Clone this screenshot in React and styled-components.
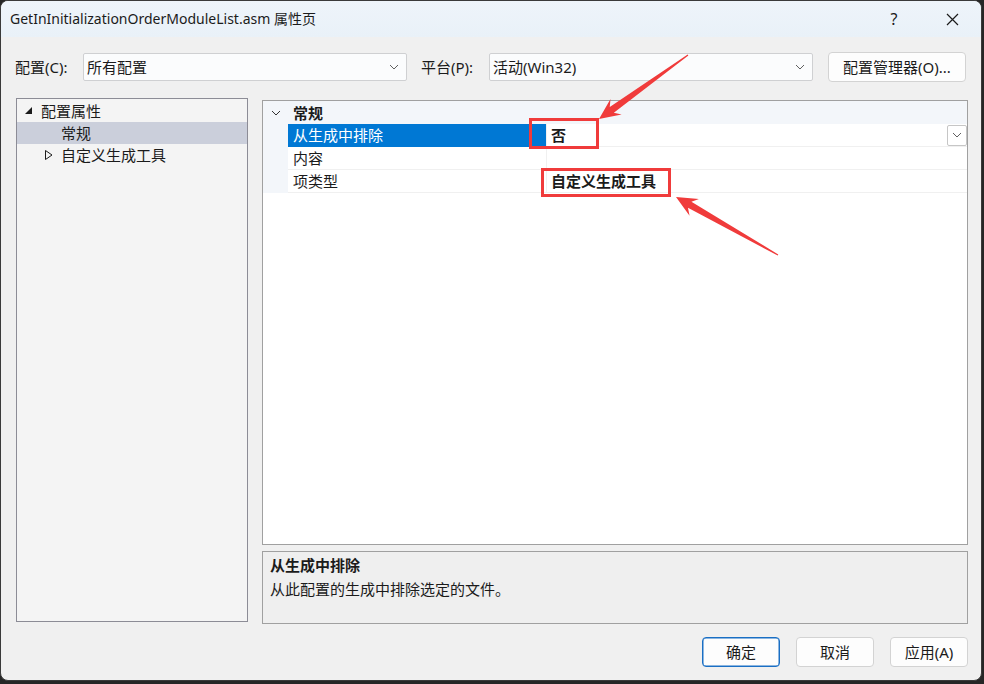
import React from 'react';
import styled, { createGlobalStyle } from 'styled-components';

const GlobalStyle = createGlobalStyle`
  body {
    margin: 0;
    background: #262626;
    font-family: "Noto Sans", "Noto Sans CJK SC", sans-serif;
    color: #1b1b1b;
  }
`;

const FONT = `"Noto Sans", "Noto Sans CJK SC", sans-serif`;

const Window = styled.div`
  position: relative;
  width: 982px;
  height: 681px;
  box-sizing: border-box;
  border: 1px solid #3a3a3a;
  border-radius: 8px;
  overflow: hidden;
  background: #f0f0f0;
  display: flex;
  flex-direction: column;
  font-family: ${FONT};
  font-size: 15px;
`;

const TitleBar = styled.div`
  height: 36px;
  flex: none;
  display: flex;
  align-items: center;
  padding-left: 9px;
  background: linear-gradient(180deg, #eef4fa, #e9f1f8);
`;

const Title = styled.span`
  font-size: 14px;
  line-height: 20px;
`;

const TitleButton = styled.div`
  width: 58px;
  height: 36px;
  display: flex;
  align-items: center;
  justify-content: center;
  margin-left: ${p => (p.$first ? 'auto' : '0')};
  font-size: 16px;
`;

const Body = styled.div`
  flex: 1;
  display: flex;
  flex-direction: column;
  padding: 15px 13px 0 15px;
`;

const ConfigRow = styled.div`
  display: flex;
  align-items: center;
  height: 30px;
`;

const Label = styled.span`
  width: ${p => p.$w}px;
  line-height: 20px;
  margin-left: ${p => p.$ml || 0}px;
`;

const Select = styled.div`
  width: 324px;
  height: 28px;
  box-sizing: border-box;
  border: 1px solid #cfd0d2;
  border-radius: 2px;
  background: #fbfcfd;
  display: flex;
  align-items: center;
  padding: 0 7px 0 3px;
  line-height: 20px;
  & > span { flex: 1; }
`;

const Button = styled.div`
  width: ${p => p.$w}px;
  height: 30px;
  box-sizing: border-box;
  border: 1px solid ${p => (p.$primary ? '#1a6fc4' : '#d3d3d3')};
  box-shadow: ${p => (p.$primary ? 'inset 0 0 0 0.5px #1a6fc4' : 'none')};
  border-radius: 4px;
  background: #fdfdfd;
  display: flex;
  align-items: center;
  justify-content: center;
  margin-left: ${p => p.$ml || 0}px;
  line-height: 20px;
`;

const Main = styled.div`
  display: flex;
  gap: 14px;
  margin-top: 16px;
  height: 526px;
`;

const Tree = styled.div`
  width: 232px;
  height: 524px;
  box-sizing: border-box;
  border: 1px solid #8c8c96;
  background: #f4f4f4;
  padding-top: 1px;
`;

const TreeRow = styled.div`
  height: 22px;
  display: flex;
  align-items: center;
  padding-left: ${p => p.$indent}px;
  background: ${p => (p.$selected ? '#cbcfdb' : 'transparent')};
  line-height: 20px;
`;

const TreeIcon = styled.span`
  width: 16px;
  display: flex;
  align-items: center;
`;

const Right = styled.div`
  flex: 1;
  display: flex;
  flex-direction: column;
  gap: 6px;
  padding-top: 2px;
`;

const Grid = styled.div`
  flex: 1;
  border: 1px solid #a0a0a0;
  background: #ffffff;
`;

const CategoryRow = styled.div`
  height: 23px;
  display: flex;
  align-items: center;
  background: #f3f6fa;
  font-weight: bold;
  line-height: 20px;
`;

const Gutter = styled.span`
  width: 25px;
  align-self: stretch;
  display: flex;
  align-items: center;
  justify-content: center;
  background: #f3f6fa;
  flex: none;
`;

const PropRow = styled.div`
  height: 23px;
  display: flex;
`;

const NameCell = styled.div`
  width: 259px;
  box-sizing: border-box;
  display: flex;
  align-items: center;
  padding-left: 5px;
  background: ${p => (p.$selected ? '#0078d4' : '#ffffff')};
  color: ${p => (p.$selected ? '#ffffff' : '#1b1b1b')};
  border-bottom: 1px solid ${p => (p.$selected ? '#0078d4' : '#f0f0f0')};
  border-right: 1px solid #f0f0f0;
  line-height: 20px;
`;

const ValueCell = styled.div`
  flex: 1;
  display: flex;
  align-items: center;
  padding-left: 4px;
  border-bottom: 1px solid #f0f0f0;
  font-weight: bold;
  line-height: 20px;
`;

const DropButton = styled.div`
  margin-left: auto;
  width: 20px;
  height: 21px;
  box-sizing: border-box;
  border: 1px solid #c6c6c6;
  border-radius: 2px;
  background: #fff;
  display: flex;
  align-items: center;
  justify-content: center;
`;

const Desc = styled.div`
  height: 73px;
  flex: none;
  box-sizing: border-box;
  border: 1px solid #a0a0a0;
  background: #efefef;
  padding: 2px 7px;
  line-height: 22px;
`;

const DescTitle = styled.div`
  font-weight: bold;
`;

const DescText = styled.div`
  margin-top: 2px;
`;

const Footer = styled.div`
  display: flex;
  justify-content: flex-end;
  gap: 16px;
  margin-top: 13px;
`;

const Overlay = styled.svg`
  position: absolute;
  left: -1px;
  top: -1px;
  pointer-events: none;
`;

const Chevron = ({ color = '#606060' }) => (
  <svg width="10" height="6" viewBox="0 0 10 6">
    <polyline points="1,1 5,5 9,1" fill="none" stroke={color} strokeWidth="1" />
  </svg>
);

const arrowPoints = (x1, y1, x2, y2) => {
  const dx = x2 - x1;
  const dy = y2 - y1;
  const len = Math.hypot(dx, dy);
  const ux = dx / len, uy = dy / len;
  const nx = -uy, ny = ux;
  const h = 21;
  const at = (d, w) => [x2 - ux * d + nx * w, y2 - uy * d + ny * w];
  const pts = [
    [x1 + nx * 0.6, y1 + ny * 0.6],
    at(h * 0.75, 3.5),
    at(h, 9.5),
    [x2, y2],
    at(h, -9.5),
    at(h * 0.75, -3.5),
    [x1 - nx * 0.6, y1 - ny * 0.6],
  ];
  return pts.map(p => p.join(',')).join(' ');
};

const RED = '#f03b3b';

const App = () => (
  <>
    <GlobalStyle />
    <Window>
      <TitleBar>
        <Title>GetInInitializationOrderModuleList.asm 属性页</Title>
        <TitleButton $first>?</TitleButton>
        <TitleButton>
          <svg width="13" height="13" viewBox="0 0 13 13">
            <path d="M1 1 L12 12 M12 1 L1 12" stroke="#1b1b1b" strokeWidth="1.2" />
          </svg>
        </TitleButton>
      </TitleBar>
      <Body>
        <ConfigRow>
          <Label $w={68} $ml={-1}>配置(C):</Label>
          <Select><span>所有配置</span><Chevron /></Select>
          <Label $w={68} $ml={14}>平台(P):</Label>
          <Select><span>活动(Win32)</span><Chevron /></Select>
          <Button $w={138} $ml={15}>配置管理器(O)...</Button>
        </ConfigRow>
        <Main>
          <Tree>
            <TreeRow $indent={8}>
              <TreeIcon>
                <svg width="8" height="8" viewBox="0 0 8 8"><polygon points="7,0 7,7 0,7" fill="#1b1b1b" /></svg>
              </TreeIcon>
              配置属性
            </TreeRow>
            <TreeRow $indent={44} $selected>常规</TreeRow>
            <TreeRow $indent={28}>
              <TreeIcon>
                <svg width="8" height="10" viewBox="0 0 8 10"><polygon points="0.5,0.5 7,5 0.5,9.5" fill="none" stroke="#1b1b1b" strokeWidth="1" /></svg>
              </TreeIcon>
              自定义生成工具
            </TreeRow>
          </Tree>
          <Right>
            <Grid>
              <CategoryRow>
                <Gutter><Chevron color="#333" /></Gutter>
                <span style={{ paddingLeft: 5 }}>常规</span>
              </CategoryRow>
              <PropRow>
                <Gutter />
                <NameCell $selected>从生成中排除</NameCell>
                <ValueCell>
                  否
                  <DropButton><Chevron /></DropButton>
                </ValueCell>
              </PropRow>
              <PropRow>
                <Gutter />
                <NameCell>内容</NameCell>
                <ValueCell />
              </PropRow>
              <PropRow>
                <Gutter />
                <NameCell>项类型</NameCell>
                <ValueCell>自定义生成工具</ValueCell>
              </PropRow>
            </Grid>
            <Desc>
              <DescTitle>从生成中排除</DescTitle>
              <DescText>从此配置的生成中排除选定的文件。</DescText>
            </Desc>
          </Right>
        </Main>
        <Footer>
          <Button $w={78} $primary>确定</Button>
          <Button $w={78}>取消</Button>
          <Button $w={78}>应用(A)</Button>
        </Footer>
      </Body>
      <Overlay width="984" height="684" viewBox="0 0 984 684">
        <rect x="530.5" y="119.5" width="67" height="28" fill="none" stroke={RED} strokeWidth="3" />
        <rect x="542.5" y="169.5" width="127" height="26" fill="none" stroke={RED} strokeWidth="3" />
        <polygon points={arrowPoints(688, 55, 599, 119)} fill={RED} />
        <polygon points={arrowPoints(778, 255, 676, 197)} fill={RED} />
      </Overlay>
    </Window>
  </>
);

export default App;
